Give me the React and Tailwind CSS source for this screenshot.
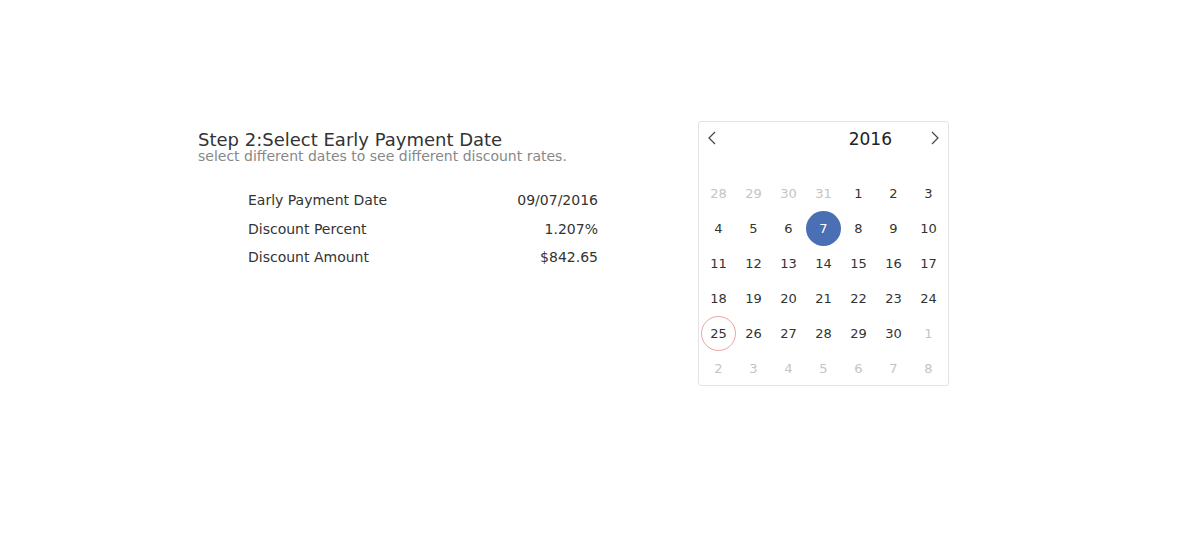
import React, { useState } from 'react';

const font = { fontFamily: '"DejaVu Sans", Verdana, sans-serif' };

const weeks = [
  [[28, 0], [29, 0], [30, 0], [31, 0], [1, 1], [2, 1], [3, 1]],
  [[4, 1], [5, 1], [6, 1], [7, 1], [8, 1], [9, 1], [10, 1]],
  [[11, 1], [12, 1], [13, 1], [14, 1], [15, 1], [16, 1], [17, 1]],
  [[18, 1], [19, 1], [20, 1], [21, 1], [22, 1], [23, 1], [24, 1]],
  [[25, 1], [26, 1], [27, 1], [28, 1], [29, 1], [30, 1], [1, 0]],
  [[2, 0], [3, 0], [4, 0], [5, 0], [6, 0], [7, 0], [8, 0]],
];

const details = [
  ['Early Payment Date', '09/07/2016'],
  ['Discount Percent', '1.207%'],
  ['Discount Amount', '$842.65'],
];

const Chevron = ({ dir }) => (
  <svg width="10" height="14" viewBox="0 0 10 14" fill="none" stroke="#444" strokeWidth="1.2">
    {dir === 'left' ? <polyline points="8,1 2,7 8,13" /> : <polyline points="2,1 8,7 2,13" />}
  </svg>
);

const App = () => {
  const [selected, setSelected] = useState(7);

  return (
    <div className="w-[1200px] h-[550px] bg-white flex pt-[121px] pl-[198px]" style={font}>
      <div className="w-[500px] pt-[9px]">
        <h2 className="text-[18px] leading-[19px] text-[#333]">Step 2:Select Early Payment Date</h2>
        <p className="text-[14px] leading-[15px] text-[#888]">select different dates to see different discount rates.</p>
        <div className="ml-[50px] w-[350px] mt-[26px] flex flex-col">
          {details.map(([label, value]) => (
            <div key={label} className="flex justify-between h-[28.5px] text-[14px] text-[#333]">
              <span>{label}</span>
              <span>{value}</span>
            </div>
          ))}
        </div>
      </div>

      <div className="w-[251px] h-[265px] border border-[#e3e3e3] rounded-[3px] px-[1px] flex flex-col">
        <div className="h-[54px] shrink-0 flex items-start pt-[6px] px-[7px]">
          <button className="h-[20px] flex items-center"><Chevron dir="left" /></button>
          <div className="flex-1 text-right pr-[38px] text-[17px] text-[#222] leading-[22px]">2016</div>
          <button className="h-[20px] flex items-center"><Chevron dir="right" /></button>
        </div>
        <div className="grid grid-cols-7 w-[245px] mx-auto shrink-0">
          {weeks.flat().map(([d, cur], i) => {
            const isSel = cur && d === selected;
            const isToday = cur && d === 25;
            return (
              <div key={i} className="h-[35px] flex items-center justify-center">
                <span
                  onClick={() => cur && setSelected(d)}
                  className={
                    'w-[35px] h-[35px] rounded-full flex items-center justify-center text-[13px] cursor-pointer ' +
                    (isSel
                      ? 'bg-[#4a6fb5] text-white'
                      : isToday
                      ? 'border border-[#f4a0a0] text-[#333]'
                      : cur
                      ? 'text-[#333]'
                      : 'text-[#c4c4c4]')
                  }
                >
                  {d}
                </span>
              </div>
            );
          })}
        </div>
      </div>
    </div>
  );
};

export default App;
